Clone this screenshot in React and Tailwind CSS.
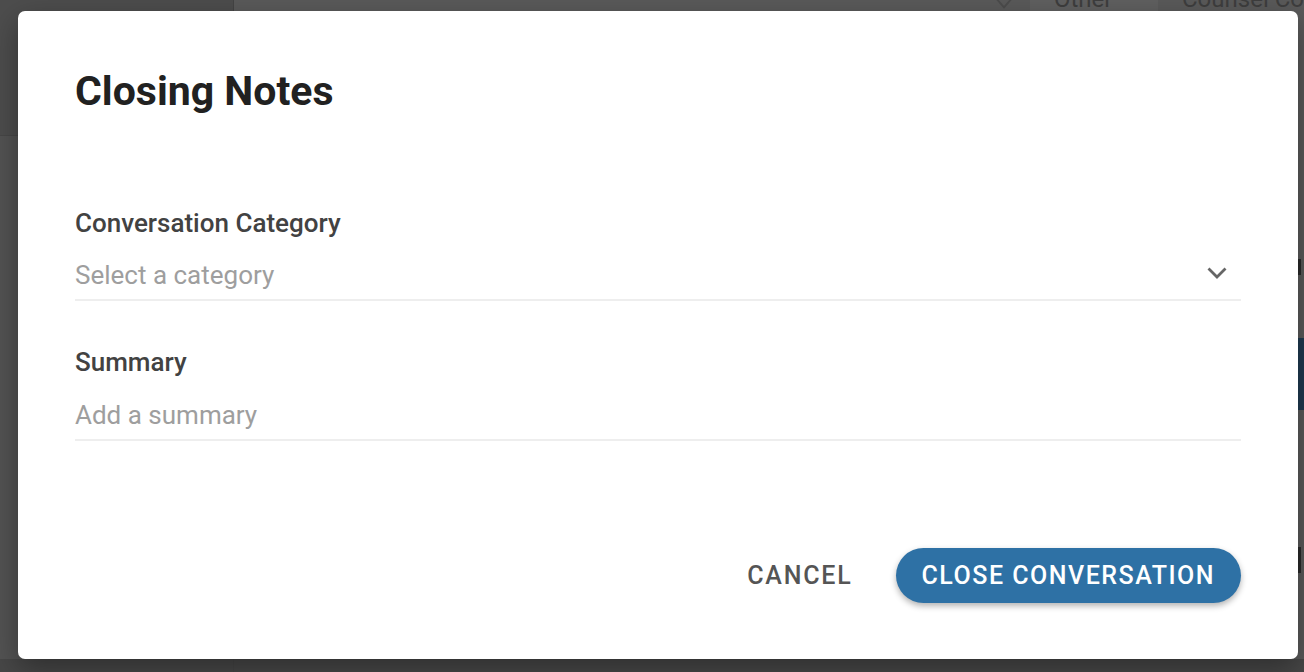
import React from 'react';

const font = { fontFamily: 'Roboto, "Noto Sans", sans-serif' };

const Field = ({ label, placeholder, select, className = '', gap = 'mt-[22px]' }) => (
  <div className={`flex flex-col ${className}`}>
    <label className="text-[26px] font-medium leading-[30px] text-[#424242]">{label}</label>
    <div className={`${gap} flex items-start justify-between border-b-2 border-[#eeeeee] pb-[9px]`}>
      <span className="text-[26px] leading-[30px] text-[#9e9e9e]">{placeholder}</span>
      {select && (
        <svg width="24" height="24" viewBox="0 0 24 24" className="mr-[12px] mt-[1px]">
          <path d="M3.5 7.5L12 16l8.5-8.5" fill="none" stroke="#666666" strokeWidth="2.8" />
        </svg>
      )}
    </div>
  </div>
);

export default function App() {
  return (
    <div className="relative h-[672px] w-[1304px] overflow-hidden bg-[#5a5a5a]" style={font}>
      {/* dimmed page behind the dialog */}
      <div className="flex h-full">
        <div className="flex w-[237px] flex-col border-r border-[#444444] bg-[#535353]">
          <div className="h-[136px] border-b border-[#474747] bg-[#4d4d4d]" />
          <div className="flex-1" />
          <div className="h-[13px] bg-[#474747]" />
        </div>
        <div className="flex flex-1 flex-col">
          <div className="flex h-[11px] items-start overflow-hidden">
            <svg width="22" height="22" viewBox="0 0 24 24" className="ml-[759px] mt-[-12px]">
              <path d="M12 3l8 9-8 9-8-9z" fill="none" stroke="#4c4c4c" strokeWidth="2" />
            </svg>
            <div className="ml-[15px] flex h-[40px] w-[128px] mt-[-20px] items-start bg-[#606060] pl-[24px]">
              <span className="mt-[5px] text-[24px] leading-[28px] text-[#3e3e3e]">Other</span>
            </div>
            <span className="ml-[24px] mt-[-15px] whitespace-nowrap text-[24px] leading-[28px] text-[#3e3e3e]">Counsel Co</span>
          </div>
          <div className="flex flex-1 justify-end">
            <div className="flex w-[6px] flex-col">
              <span className="mt-[248px] h-[16px] w-[3px] bg-[#2a2a2a]" />
              <span className="mt-[63px] h-[72px] bg-[#1f3a50]" />
              <span className="mt-[137px] h-[26px] w-[3px] bg-[#2a2a2a]" />
            </div>
          </div>
          <div className="h-[13px] bg-[#474747]" />
        </div>
      </div>

      {/* dialog */}
      <div className="absolute left-[18px] top-[11px] flex h-[648px] w-[1280px] flex-col rounded-[7px] bg-white px-[57px] shadow-[0_10px_30px_rgba(0,0,0,0.35)]">
        <h2 className="mt-[56px] text-[41px] font-bold leading-[48px] text-[#212121]">Closing Notes</h2>
        <Field className="mt-[93px]" label="Conversation Category" placeholder="Select a category" select />
        <Field className="mt-[46px]" gap="mt-[23px]" label="Summary" placeholder="Add a summary" />
        <div className="mt-auto mb-[56px] flex items-center justify-end gap-[43px]">
          <button className="text-[25px] font-medium leading-[30px] tracking-[1.8px] text-[#555555]">CANCEL</button>
          <button className="h-[55px] rounded-full bg-[#2e71a5] px-[26px] text-[25px] font-medium leading-[30px] tracking-[1.5px] text-white shadow-[0_3px_6px_rgba(0,0,0,0.3)]">
            CLOSE CONVERSATION
          </button>
        </div>
      </div>
    </div>
  );
}
